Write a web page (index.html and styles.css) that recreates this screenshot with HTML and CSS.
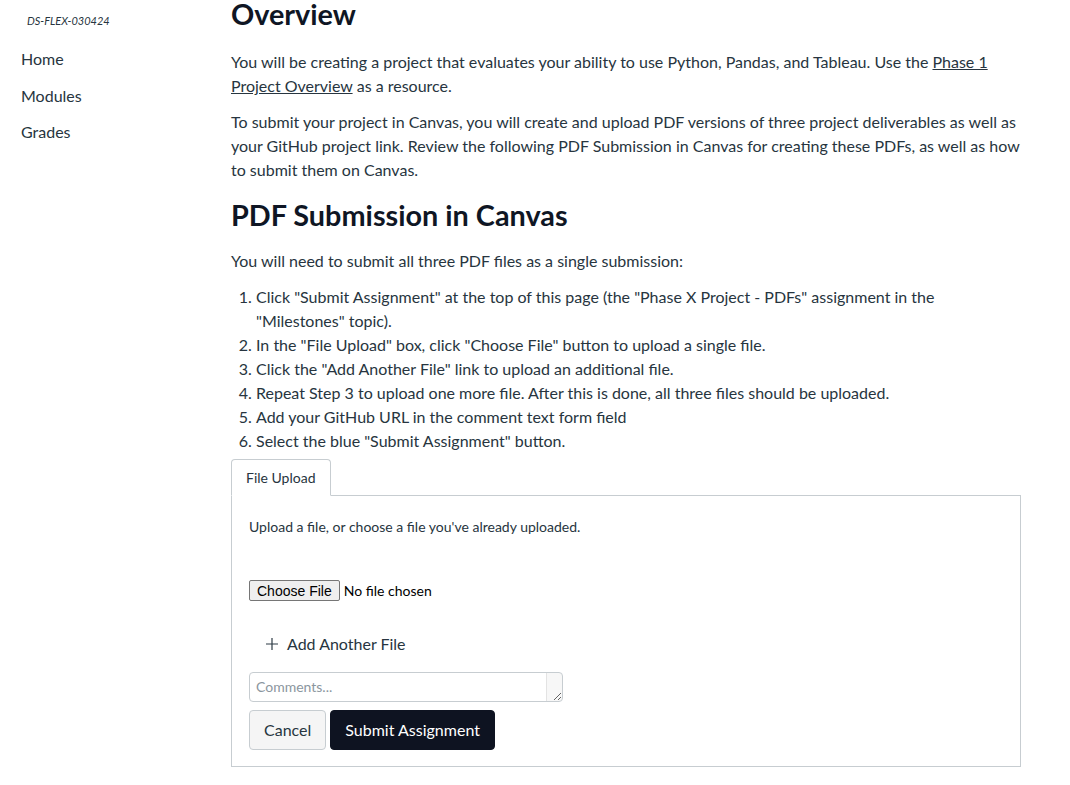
FILE: index.html
```html
<!DOCTYPE html>
<html lang="en">
<head>
<meta charset="utf-8">
<title>Overview</title>
<link rel="stylesheet" href="styles.css">
</head>
<body>
<div class="layout">
  <aside class="sidebar">
    <div class="course-code">DS-FLEX-030424</div>
    <nav class="nav">
      <a class="nav-link" href="#">Home</a>
      <a class="nav-link" href="#">Modules</a>
      <a class="nav-link" href="#">Grades</a>
    </nav>
  </aside>
  <main class="content">
    <h2 class="heading heading-first">Overview</h2>
    <p class="para">You will be creating a project that evaluates your ability to use Python, Pandas, and Tableau. Use the <a class="link" href="#">Phase 1 Project Overview</a> as a resource.</p>
    <p class="para">To submit your project in Canvas, you will create and upload PDF versions of three project deliverables as well as your GitHub project link. Review the following PDF Submission in Canvas for creating these PDFs, as well as how to submit them on Canvas.</p>
    <h2 class="heading">PDF Submission in Canvas</h2>
    <p class="para">You will need to submit all three PDF files as a single submission:</p>
    <ol class="steps">
      <li>Click "Submit Assignment" at the top of this page (the "Phase X Project - PDFs" assignment in the "Milestones" topic).</li>
      <li>In the "File Upload" box, click "Choose File" button to upload a single file.</li>
      <li>Click the "Add Another File" link to upload an additional file.</li>
      <li>Repeat Step 3 to upload one more file. After this is done, all three files should be uploaded.</li>
      <li>Add your GitHub URL in the comment text form field</li>
      <li>Select the blue "Submit Assignment" button.</li>
    </ol>
    <div class="tabs">
      <div class="tab-bar">
        <div class="tab">File Upload</div>
      </div>
      <div class="panel">
        <div class="panel-intro">Upload a file, or choose a file you've already uploaded.</div>
        <div class="file-row">
          <button class="file-btn" type="button">Choose File</button>
          <span class="file-status">No file chosen</span>
        </div>
        <a class="add-file" href="#">
          <svg class="plus" width="14" height="14" viewBox="0 0 14 14" aria-hidden="true">
            <path d="M7 1v12M1 7h12" stroke="#2d3b45" stroke-width="1.2" fill="none"/>
          </svg>
          <span>Add Another File</span>
        </a>
        <textarea class="comments" rows="1" placeholder="Comments..."></textarea>
        <div class="actions">
          <button class="btn btn-cancel" type="button">Cancel</button>
          <button class="btn btn-submit" type="button">Submit Assignment</button>
        </div>
      </div>
    </div>
  </main>
</div>
</body>
</html>
```
FILE: styles.css
```css
html, body {
  margin: 0;
  padding: 0;
  background: #ffffff;
}
body {
  font-family: Lato, "Noto Sans", sans-serif;
  color: #273540;
  font-size: 16px;
  line-height: 24px;
}
.layout {
  display: flex;
  align-items: flex-start;
}
.sidebar {
  width: 231px;
  flex: none;
}
.course-code {
  font-size: 11px;
  font-style: italic;
  line-height: 16px;
  padding: 13px 0 0 27px;
  color: #273540;
}
.nav {
  display: flex;
  flex-direction: column;
  padding: 18px 0 0 21px;
}
.nav-link {
  color: #273540;
  text-decoration: none;
  font-size: 16px;
  line-height: 24px;
  margin-bottom: 12.5px;
}
.content {
  width: 790px;
  flex: none;
}
.heading {
  font-size: 28.8px;
  font-weight: 700;
  line-height: 36px;
  color: #0f1624;
  margin: 15px 0 16px;
}
.heading-first {
  margin-top: -4px;
  margin-bottom: 18px;
}
.para {
  margin: 0 0 12px;
}
.link {
  color: #273540;
  text-decoration: underline;
}
.steps {
  margin: 0 0 6px;
  padding-left: 25px;
}
.tabs {
  display: flex;
  flex-direction: column;
}
.tab-bar {
  display: flex;
  position: relative;
  z-index: 1;
  margin-bottom: -1px;
}
.tab {
  font-size: 14px;
  line-height: 20px;
  padding: 8px 14px 7px 14px;
  border: 1px solid #c7cdd1;
  border-bottom: 1px solid #ffffff;
  border-radius: 4px 4px 0 0;
  background: #ffffff;
  color: #273540;
}
.panel {
  border: 1px solid #c7cdd1;
  padding: 21px 17px 16px 17px;
  display: flex;
  flex-direction: column;
  align-items: flex-start;
}
.panel-intro {
  font-size: 14px;
  line-height: 20px;
  color: #273540;
}
.file-row {
  display: flex;
  align-items: center;
  margin-top: 44px;
}
.file-btn {
  font-family: "Liberation Sans", Arial, sans-serif;
  font-size: 14px;
  line-height: 16px;
  color: #000;
  background: #efefef;
  border: 1px solid #767676;
  border-radius: 2px;
  padding: 1px 7px;
  height: 21px;
  margin: -1px 4px 0 0;
}
.file-status {
  font-size: 14px;
  line-height: 20px;
  color: #000;
}
.add-file {
  display: flex;
  align-items: center;
  gap: 8px;
  margin: 31px 0 0 16px;
  color: #273540;
  text-decoration: none;
  font-size: 16px;
  line-height: 24px;
}
.plus {
  display: block;
}
.comments {
  margin-top: 16px;
  width: 314px;
  height: 30px;
  box-sizing: border-box;
  border: 1px solid #c7cdd1;
  border-radius: 4px;
  font-family: Lato, "Noto Sans", sans-serif;
  font-size: 14px;
  line-height: 20px;
  padding: 4px 22px 4px 6px;
  overflow: hidden;
  resize: both;
  color: #273540;
  background: linear-gradient(to right, #ffffff 0, #ffffff calc(100% - 16px), #e3e3e3 calc(100% - 16px), #e3e3e3 calc(100% - 15px), #f7f7f7 calc(100% - 15px));
}
.comments::placeholder {
  color: #8b969e;
}
.actions {
  display: flex;
  gap: 4px;
  margin-top: 8px;
}
.btn {
  font-family: Lato, "Noto Sans", sans-serif;
  font-size: 16px;
  line-height: 24px;
  height: 40px;
  padding: 7px 14px;
  border-radius: 4px;
  box-sizing: border-box;
}
.btn-cancel {
  background: #f5f5f5;
  border: 1px solid #c7cdd1;
  color: #273540;
}
.btn-submit {
  background: #0e1321;
  border: 1px solid #0e1321;
  color: #ffffff;
}
```
